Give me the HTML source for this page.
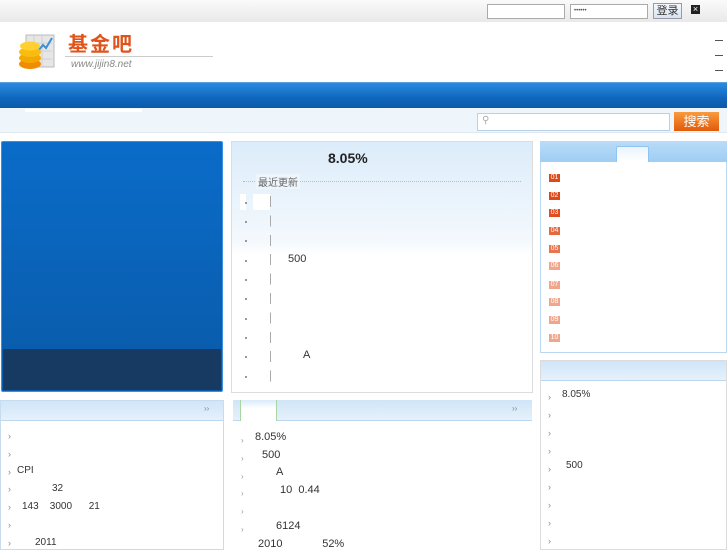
<!DOCTYPE html>
<html><head><meta charset="utf-8"><style>
*{margin:0;padding:0;box-sizing:border-box}
body{width:727px;height:545px;overflow:hidden;background:#fff;font-family:"Liberation Sans","Noto Sans CJK SC",sans-serif;font-size:11px;color:#333;position:relative}
.a{position:absolute}
.top{left:0;top:0;width:727px;height:22px;background:linear-gradient(#fafafa,#e9e9e9)}
.inp{background:#fff;border:1px solid #aaa;height:15px;top:4px}
.nav{left:0;top:82px;width:727px;height:26px;background:linear-gradient(#2a8ae0,#0f67bd 60%,#0b5aa8);border-top:1px solid #5aa0e0}
.sub{left:0;top:108px;width:727px;height:25px;background:#eef5fb;border-bottom:1px solid #e0e8f0}
.box{border:1px solid #dcdcdc;background:#fff}
.hd{background:linear-gradient(#cfe5f8,#e6f1fb);border-bottom:1px solid #bcd8f0}
.rk{left:549px;width:11px;height:8px;color:#fff;font-size:7px;line-height:8px;text-align:center}
.dot{width:2px;height:2px;background:#999}
.t{font-size:11px;color:#333}
</style></head><body>
<div class="a top"></div>
<div class="a inp" style="left:487px;width:78px"></div>
<div class="a inp" style="left:570px;width:78px;font-size:6px;padding:3px 3px;color:#555">••••••</div>
<div class="a" style="left:653px;top:3px;width:29px;height:16px;border:1px solid #99a;background:linear-gradient(#f4f8fc,#d8e4ef);font-size:11px;text-align:center;line-height:14px;color:#333">登录</div>
<div class="a" style="left:691px;top:5px;width:9px;height:9px;background:#222;color:#fff;font-size:9px;line-height:9px;text-align:center">×</div>
<svg class="a" style="left:12px;top:33px" width="50" height="38">
<rect x="14" y="2" width="28" height="32" fill="#e6e6e6" stroke="#bbb"/>
<path d="M16 10H40M16 18H40M16 26H40M22 3V33M30 3V33" stroke="#d0d0d0" stroke-width="1"/>
<polyline points="26,18 31,12 34,15 40,5" fill="none" stroke="#3a8fd8" stroke-width="2"/>
<ellipse cx="18" cy="31" rx="11" ry="5" fill="#f08c00"/><ellipse cx="18" cy="25" rx="11" ry="5" fill="#f5a800"/><ellipse cx="18" cy="19" rx="11" ry="5" fill="#f9bc10"/><ellipse cx="18" cy="13" rx="10" ry="4.5" fill="#ffd030"/>
</svg>
<div class="a" style="left:68px;top:32px;font-size:20px;line-height:22px;color:#e0531a;font-family:'Noto Sans CJK SC',sans-serif;font-weight:bold;letter-spacing:2px">基金吧</div>
<div class="a" style="left:65px;top:56px;width:148px;height:1px;background:#ccc"></div>
<div class="a" style="left:71px;top:59px;font-size:10px;font-style:italic;color:#888">www.jijin8.net</div>
<div class="a" style="left:715px;top:40px;width:8px;height:1px;background:#555"></div>
<div class="a" style="left:715px;top:55px;width:8px;height:1px;background:#555"></div>
<div class="a" style="left:715px;top:70px;width:8px;height:1px;background:#555"></div>
<div class="a nav"></div>
<div class="a sub"></div>
<div class="a" style="left:25px;top:109px;width:117px;height:3px;background:#fff"></div>
<div class="a" style="left:477px;top:113px;width:193px;height:18px;background:#fff;border:1px solid #b8d0e8"></div>
<div class="a" style="left:482px;top:115px;font-size:10px;color:#aaa">⚲</div>
<div class="a" style="left:674px;top:112px;width:45px;height:19px;background:linear-gradient(#f99a40,#e35a08);color:#fff;font-size:13px;text-align:center;line-height:19px">搜索</div>
<div class="a" style="left:1px;top:141px;width:222px;height:251px;border:1px solid #3a8fe0;border-radius:2px;background:linear-gradient(#0a6cc9,#0a5aa8)"></div>
<div class="a" style="left:3px;top:349px;width:218px;height:41px;background:#163a62"></div>
<div class="a box" style="left:231px;top:141px;width:302px;height:252px;background:linear-gradient(#dcecfa,#f4f9fd 40%,#fff 45%)"></div>
<div class="a" style="left:328px;top:150px;font-size:14px;font-weight:bold;color:#222">8.05%</div>
<div class="a" style="left:243px;top:181px;width:278px;border-top:1px dotted #bbb"></div>
<div class="a" style="left:256px;top:174px;font-size:10px;color:#666;background:#eef5fb;padding:0 2px">最近更新</div>
<div class="a" style="left:253px;top:194px;width:17px;height:16px;background:#fff"></div>
<div class="a" style="left:240px;top:194px;width:6px;height:16px;background:#fff"></div>
<div class="a dot" style="left:245px;top:202px"></div><div class="a dot" style="left:245px;top:221px"></div><div class="a dot" style="left:245px;top:240px"></div><div class="a dot" style="left:245px;top:260px"></div><div class="a dot" style="left:245px;top:279px"></div><div class="a dot" style="left:245px;top:298px"></div><div class="a dot" style="left:245px;top:318px"></div><div class="a dot" style="left:245px;top:337px"></div><div class="a dot" style="left:245px;top:356px"></div><div class="a dot" style="left:245px;top:376px"></div>
<div class="a" style="left:270px;top:196px;width:1px;height:186px;background:repeating-linear-gradient(#aaa 0 11px,transparent 11px 19.4px)"></div>
<div class="a t" style="left:288px;top:253px">500</div>
<div class="a t" style="left:303px;top:349px">A</div>
<div class="a box" style="left:540px;top:141px;width:187px;height:212px;border-color:#bcd8f0"></div>
<div class="a" style="left:540px;top:141px;width:187px;height:21px;background:linear-gradient(#b9dcf8,#9fcdf3);border-radius:3px 3px 0 0"></div>
<div class="a" style="left:616px;top:146px;width:33px;height:16px;background:linear-gradient(#eaf4fd,#fff);border:1px solid #8ec4ef;border-bottom:0;border-radius:2px 2px 0 0"></div>
<div class="a rk" style="top:174px;background:#e04818">01</div>
<div class="a rk" style="top:192px;background:#e04818">02</div>
<div class="a rk" style="top:209px;background:#e24c1e">03</div>
<div class="a rk" style="top:227px;background:#e8683e">04</div>
<div class="a rk" style="top:245px;background:#ea7450">05</div>
<div class="a rk" style="top:262px;background:#f0a68c">06</div>
<div class="a rk" style="top:281px;background:#f0a68c">07</div>
<div class="a rk" style="top:298px;background:#f0a68c">08</div>
<div class="a rk" style="top:316px;background:#f0a68c">09</div>
<div class="a rk" style="top:334px;background:#f0a68c">10</div>
<div class="a box" style="left:540px;top:360px;width:187px;height:190px"></div>
<div class="a hd" style="left:541px;top:361px;width:185px;height:20px"></div>
<div class="a t" style="left:562px;top:389px;font-size:10px">8.05%</div>
<div class="a t" style="left:566px;top:460px;font-size:10px">500</div>
<div class="a" style="left:548px;top:388px;font-size:9px;color:#888;line-height:18px">›<br>›<br>›<br>›<br>›<br>›<br>›<br>›<br>›</div>
<div class="a box" style="left:0;top:400px;width:224px;height:150px;border-color:#c8dcef"></div>
<div class="a hd" style="left:1px;top:401px;width:222px;height:20px"></div>
<div class="a" style="left:204px;top:404px;font-size:8px;color:#888">››</div>
<div class="a" style="left:8px;top:428px;font-size:9px;color:#888;line-height:17.8px">›<br>›<br>›<br>›<br>›<br>›<br>›</div>
<div class="a t" style="left:17px;top:465px;font-size:10px">CPI</div>
<div class="a t" style="left:52px;top:483px;font-size:10px">32</div>
<div class="a t" style="left:22px;top:501px;font-size:10px">143 &nbsp;&nbsp; 3000 &nbsp;&nbsp;&nbsp;&nbsp; 21</div>
<div class="a t" style="left:35px;top:537px;font-size:10px">2011</div>
<div class="a hd" style="left:233px;top:400px;width:299px;height:21px"></div>
<div class="a" style="left:240px;top:400px;width:37px;height:21px;background:linear-gradient(#d9ebfa,#fff 40%);border-left:1px solid #a8d6a0;border-right:1px solid #a8d6a0"></div>
<div class="a" style="left:512px;top:404px;font-size:8px;color:#888">››</div>
<div class="a" style="left:241px;top:432px;font-size:8px;color:#999;line-height:17.8px">›<br>›<br>›<br>›<br>›<br>›</div>
<div class="a t" style="left:255px;top:431px">8.05%</div>
<div class="a t" style="left:262px;top:449px">500</div>
<div class="a t" style="left:276px;top:466px">A</div>
<div class="a t" style="left:280px;top:484px">10 &nbsp;0.44</div>
<div class="a t" style="left:276px;top:520px">6124</div>
<div class="a t" style="left:258px;top:538px">2010 &nbsp;&nbsp;&nbsp;&nbsp;&nbsp;&nbsp;&nbsp;&nbsp;&nbsp;&nbsp;&nbsp; 52%</div>
</body></html>
